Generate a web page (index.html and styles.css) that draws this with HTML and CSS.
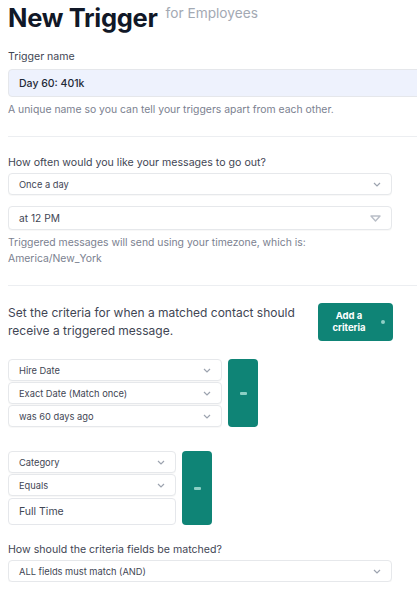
FILE: index.html
```html
<!DOCTYPE html>
<html>
<head>
<meta charset="utf-8">
<link rel="stylesheet" href="styles.css">
</head>
<body>
<div class="page">
  <div class="title-row">
    <h1 class="title">New Trigger</h1>
    <span class="subtitle">for Employees</span>
  </div>

  <div class="label first-label">Trigger name</div>
  <div class="text-input name-input">Day 60: 401k</div>
  <div class="help">A unique name so you can tell your triggers apart from each other.</div>

  <div class="divider"></div>

  <div class="label sec-label">How often would you like your messages to go out?</div>
  <div class="select small wide">
    <span>Once a day</span>
    <svg class="chev" width="8" height="5" viewBox="0 0 8 5"><path d="M1 1l3 3 3-3" fill="none" stroke="#9ca3af" stroke-width="1.2"/></svg>
  </div>
  <div class="select tall wide gap-11">
    <span>at 12 PM</span>
    <svg class="tri" width="11" height="7" viewBox="0 0 11 7"><path d="M1 1h9L5.5 6z" fill="none" stroke="#b9bec7" stroke-width="1.4" stroke-linejoin="round"/></svg>
  </div>
  <div class="help tz">Triggered messages will send using your timezone, which is:<br>America/New_York</div>

  <div class="divider"></div>

  <div class="criteria-head">
    <p class="criteria-text">Set the criteria for when a matched contact should receive a triggered message.</p>
    <button class="add-btn"><span>Add a<br>criteria</span><i class="plus-dot"></i></button>
  </div>

  <div class="group g1">
    <div class="fields f1">
      <div class="select small"><span>Hire Date</span><svg class="chev" width="8" height="5" viewBox="0 0 8 5"><path d="M1 1l3 3 3-3" fill="none" stroke="#9ca3af" stroke-width="1.2"/></svg></div>
      <div class="select small"><span>Exact Date (Match once)</span><svg class="chev" width="8" height="5" viewBox="0 0 8 5"><path d="M1 1l3 3 3-3" fill="none" stroke="#9ca3af" stroke-width="1.2"/></svg></div>
      <div class="select small"><span>was 60 days ago</span><svg class="chev" width="8" height="5" viewBox="0 0 8 5"><path d="M1 1l3 3 3-3" fill="none" stroke="#9ca3af" stroke-width="1.2"/></svg></div>
    </div>
    <button class="remove-btn"><i class="minus"></i></button>
  </div>

  <div class="group g2">
    <div class="fields f2">
      <div class="select small"><span>Category</span><svg class="chev" width="8" height="5" viewBox="0 0 8 5"><path d="M1 1l3 3 3-3" fill="none" stroke="#9ca3af" stroke-width="1.2"/></svg></div>
      <div class="select small"><span>Equals</span><svg class="chev" width="8" height="5" viewBox="0 0 8 5"><path d="M1 1l3 3 3-3" fill="none" stroke="#9ca3af" stroke-width="1.2"/></svg></div>
      <div class="text-input value-input">Full Time</div>
    </div>
    <button class="remove-btn"><i class="minus"></i></button>
  </div>

  <div class="label match-label">How should the criteria fields be matched?</div>
  <div class="select small wide">
    <span>ALL fields must match (AND)</span>
    <svg class="chev" width="8" height="5" viewBox="0 0 8 5"><path d="M1 1l3 3 3-3" fill="none" stroke="#9ca3af" stroke-width="1.2"/></svg>
  </div>
</div>
</body>
</html>
```

FILE: styles.css
```css
* { box-sizing: border-box; }
html, body { margin: 0; padding: 0; background: #fff; }
body {
  font-family: Inter, "Noto Sans", "Liberation Sans", sans-serif;
  color: #374151;
  overflow: hidden;
}
.page {
  padding: 3px 0 0 8px;
  width: 417px;
}
.title-row {
  display: flex;
  align-items: flex-start;
  gap: 8px;
  height: 30px;
}
.title {
  margin: 0;
  font-size: 25.5px;
  line-height: 30px;
  font-weight: 700;
  color: #111827;
  letter-spacing: -0.3px;
}
.subtitle {
  font-size: 13.7px;
  line-height: 16px;
  color: #a3a9b3;
  margin-top: 2px;
}
.label {
  font-size: 10.6px;
  line-height: 16px;
  color: #3f4654;
}
.first-label { margin-top: 16px; }
.sec-label { margin-top: 18px; }
.match-label { margin-top: 17px; }
.text-input {
  display: flex;
  align-items: center;
  border: 1px solid #e5e7eb;
  border-radius: 4px;
  padding-left: 10px;
  color: #1f2937;
}
.name-input {
  margin-top: 4px;
  height: 28px;
  margin-right: -12px;
  background: #eef2fd;
  font-size: 10.5px;
  font-weight: 500;
}
.help {
  font-size: 10.4px;
  line-height: 16px;
  color: #7b8190;
  margin-top: 5px;
}
.divider {
  height: 1px;
  background: #eceef1;
  margin-top: 18px;
}
.select {
  display: flex;
  align-items: center;
  justify-content: space-between;
  border: 1px solid #e6e8eb;
  border-radius: 4px;
  background: #fff;
  padding: 0 10px 0 10px;
  color: #3f4654;
  box-shadow: 0 1px 1px rgba(0,0,0,0.03);
}
.select.small { height: 22px; font-size: 9.3px; }
.select.tall { height: 24px; font-size: 10.2px; }
.select.wide { width: 384px; margin-top: 2px; }
.select.gap-11 { margin-top: 11px; }
.chev { flex: none; }
.tri { flex: none; }
.criteria-head {
  display: flex;
  justify-content: space-between;
  align-items: flex-start;
  width: 385px;
  margin-top: 17px;
}
.criteria-text {
  margin: 1px 0 0;
  width: 300px;
  font-size: 12px;
  line-height: 18px;
  color: #3f4654;
}
.add-btn {
  flex: none;
  width: 75px;
  height: 38px;
  border: none;
  border-radius: 4px;
  background: #0f8476;
  color: #fff;
  font-family: inherit;
  font-size: 9.5px;
  font-weight: 700;
  line-height: 12px;
  display: flex;
  align-items: center;
  justify-content: center;
  gap: 15px;
  padding: 0 0 0 6px;
}
.plus-dot {
  width: 4px;
  height: 4px;
  border-radius: 50%;
  background: #8fcfc5;
}
.group {
  display: flex;
  align-items: stretch;
  gap: 6px;
}
.g1 { margin-top: 18px; }
.g2 { margin-top: 24px; }
.fields {
  display: flex;
  flex-direction: column;
  gap: 1px;
}
.f1 { width: 214px; }
.f2 { width: 168px; }
.value-input {
  margin-top: 1px;
  height: 27px;
  font-size: 10.5px;
  background: #fff;
  color: #3f4654;
}
.remove-btn {
  width: 30px;
  border: none;
  border-radius: 4px;
  background: #0f8476;
  display: flex;
  align-items: center;
  justify-content: center;
  padding: 0;
}
.minus {
  width: 7px;
  height: 3px;
  border-radius: 1px;
  background: #8ccfc4;
}
```
